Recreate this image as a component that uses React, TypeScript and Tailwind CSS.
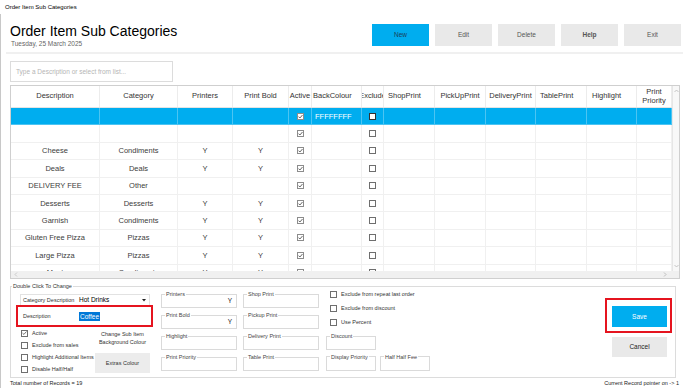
import React from 'react';

type Col = { label: string; w: string; align: string };

const cols: Col[] = [
  { label: 'Description', w: 'w-[89px]', align: 'justify-center' },
  { label: 'Category', w: 'w-[78px]', align: 'justify-center' },
  { label: 'Printers', w: 'w-[55px]', align: 'justify-center' },
  { label: 'Print Bold', w: 'w-[56px]', align: 'justify-center' },
  { label: 'Active', w: 'w-[23px]', align: 'justify-center' },
  { label: 'BackColour', w: 'w-[50px]', align: 'justify-start pl-[1px]' },
  { label: 'Exclude', w: 'w-[22px]', align: 'justify-center' },
  { label: 'ShopPrint', w: 'w-[51px]', align: 'justify-start pl-[4px]' },
  { label: 'PickUpPrint', w: 'w-[51px]', align: 'justify-center' },
  { label: 'DeliveryPrint', w: 'w-[50px]', align: 'justify-center' },
  { label: 'TablePrint', w: 'w-[51px]', align: 'justify-start pl-[4px]' },
  { label: 'Highlight', w: 'w-[50px]', align: 'justify-start pl-[5px]' },
  { label: 'Print\nPriority', w: 'w-[35px]', align: 'justify-center' },
];

type Row = { d: string; c: string; p: string; b: string; back: string };

const rows: Row[] = [
  { d: '', c: '', p: '', b: '', back: 'FFFFFFFF' },
  { d: '', c: '', p: '', b: '', back: '' },
  { d: 'Cheese', c: 'Condiments', p: 'Y', b: 'Y', back: '' },
  { d: 'Deals', c: 'Deals', p: 'Y', b: 'Y', back: '' },
  { d: 'DELIVERY FEE', c: 'Other', p: '', b: '', back: '' },
  { d: 'Desserts', c: 'Desserts', p: 'Y', b: 'Y', back: '' },
  { d: 'Garnish', c: 'Condiments', p: 'Y', b: 'Y', back: '' },
  { d: 'Gluten Free Pizza', c: 'Pizzas', p: 'Y', b: 'Y', back: '' },
  { d: 'Large Pizza', c: 'Pizzas', p: 'Y', b: 'Y', back: '' },
  { d: 'Meat', c: 'Condiments', p: 'Y', b: 'Y', back: '' },
];

// kleines Häkchen-Kästchen wie in der WinForms-Tabelle
const CheckMark = ({ on }: { on: boolean }) => (
  <span
    className={`flex items-center justify-center w-[7px] h-[7px] bg-white border ${
      on ? 'border-[#8c8c8c]' : 'border-[#6e6e6e]'
    }`}
  >
    {on && (
      <svg width="5" height="5" viewBox="0 0 5 5">
        <path d="M0.5 2.6 L1.9 4 L4.5 1" fill="none" stroke="#555" strokeWidth="0.9" />
      </svg>
    )}
  </span>
);

const FormCheck = ({ label, on = false }: { label: string; on?: boolean }) => (
  <div className="flex items-center gap-[4px] h-[12px]">
    <span className="flex items-center justify-center w-[7px] h-[7px] border border-[#6f6f6f] bg-white shrink-0">
      {on && (
        <svg width="6" height="6" viewBox="0 0 6 6">
          <path d="M0.6 3.1 L2.3 4.7 L5.4 1.2" fill="none" stroke="#444" strokeWidth="0.9" />
        </svg>
      )}
    </span>
    <span className="text-[5.5px] leading-[7px] text-[#333] whitespace-nowrap">{label}</span>
  </div>
);

const GroupBox = ({ label, value, w }: { label: string; value?: string; w: string }) => (
  <fieldset className={`border border-[#dadada] ${w} h-[16.5px] px-[3px] min-w-0`}>
    <legend className="px-[1px] text-[5.5px] leading-[6px] text-[#444]">{label}</legend>
    {value && <div className="text-right text-[6.5px] leading-[8px] text-[#222] pr-[1px]">{value}</div>}
  </fieldset>
);

const TopButton = ({ label, primary = false, bold = false }: { label: string; primary?: boolean; bold?: boolean }) => (
  <div
    className={`w-[57px] h-[22px] flex items-center justify-center text-[6.5px] ${
      primary ? 'bg-[#00adef] text-[#1b3d5c]' : 'bg-[#e9e9e9] text-[#555]'
    } ${bold ? 'font-bold text-[#333]' : ''}`}
  >
    {label}
  </div>
);

export default function App() {
  return (
    <div className="w-[688px] h-[388px] bg-white overflow-hidden flex flex-col font-['Liberation_Sans',Arial,sans-serif] text-[#222]">
      {/* Fenstertitel */}
      <div className="h-[14px] flex items-center pl-[5px] text-[6px] text-black shrink-0">Order Item Sub Categories</div>

      <div className="flex-1 border-l border-[#c8c8c8] flex flex-col">
        {/* Kopfbereich */}
        <div className="h-[38px] flex shrink-0">
          <div className="pl-[9px] pt-[9px]">
            <div className="text-[14px] leading-[16px] text-black">Order Item Sub Categories</div>
            <div className="text-[6.5px] leading-[8px] text-[#666] pl-[1px] mt-[1px]">Tuesday, 25 March 2025</div>
          </div>
          <div className="ml-auto flex gap-[6px] pr-[7px] pt-[10px]">
            <TopButton label="New" primary />
            <TopButton label="Edit" />
            <TopButton label="Delete" />
            <TopButton label="Help" bold />
            <TopButton label="Exit" />
          </div>
        </div>
        <div className="h-[2px] bg-[#f0f0f0] mx-[5px] shrink-0" />

        {/* Suchfeld */}
        <div className="mt-[7px] ml-[9px] w-[163px] h-[21px] border border-[#dcdcdc] flex items-center pl-[5px] text-[6.5px] text-[#b5b5b5] shrink-0">
          Type a Description or select from list...
        </div>

        {/* Tabelle */}
        <div className="mt-[3px] ml-[9px] w-[670px] h-[194px] border border-[#cfcfcf] flex flex-col shrink-0">
          <div className="flex h-[185px]">
            <div className="w-[661px] overflow-hidden">
              <div className="flex h-[22px] border-b border-[#e4e4e4]">
                {cols.map((c) => (
                  <div
                    key={c.label}
                    className={`${c.w} shrink-0 flex items-center ${c.align} border-r border-[#ececec] overflow-hidden text-center text-[7.5px] leading-[8.5px] text-[#333]`}
                  >
                    <span className="whitespace-pre">{c.label}</span>
                  </div>
                ))}
              </div>
              {rows.map((r, i) => {
                const sel = i === 0;
                const cell = `shrink-0 flex items-center border-r overflow-hidden whitespace-nowrap ${
                  sel ? 'border-[#4cc4f2]' : 'border-[#f0f0f0]'
                }`;
                return (
                  <div
                    key={i}
                    className={`flex h-[17.4px] border-b text-[7.5px] ${
                      sel ? 'bg-[#00adef] text-white border-[#4cc4f2]' : 'bg-white text-[#3c3c3c] border-[#f0f0f0]'
                    }`}
                  >
                    <div className={`${cell} w-[89px] justify-center`}>{r.d}</div>
                    <div className={`${cell} w-[78px] justify-center`}>{r.c}</div>
                    <div className={`${cell} w-[55px] justify-center`}>{r.p}</div>
                    <div className={`${cell} w-[56px] justify-center`}>{r.b}</div>
                    <div className={`${cell} w-[23px] justify-center`}>
                      <CheckMark on />
                    </div>
                    <div className={`${cell} w-[50px] justify-start pl-[3px]`}>{r.back}</div>
                    <div className={`${cell} w-[22px] justify-center`}>
                      {sel ? (
                        <span className="w-[7px] h-[7px] bg-white border-[1.5px] border-[#333]" />
                      ) : (
                        <CheckMark on={false} />
                      )}
                    </div>
                    <div className={`${cell} w-[51px]`} />
                    <div className={`${cell} w-[51px]`} />
                    <div className={`${cell} w-[50px]`} />
                    <div className={`${cell} w-[51px]`} />
                    <div className={`${cell} w-[50px]`} />
                    <div className={`${cell} w-[35px]`} />
                  </div>
                );
              })}
            </div>
            <div className="flex-1 bg-[#f8f8f8] border-l border-[#e6e6e6] flex flex-col items-center justify-between py-[3px]">
              <svg width="5" height="4" viewBox="0 0 5 4">
                <path d="M0.5 3 L2.5 1 L4.5 3" fill="none" stroke="#b8b8b8" strokeWidth="0.8" />
              </svg>
              <svg width="5" height="4" viewBox="0 0 5 4">
                <path d="M0.5 1 L2.5 3 L4.5 1" fill="none" stroke="#b8b8b8" strokeWidth="0.8" />
              </svg>
            </div>
          </div>
          <div className="flex-1 bg-[#f0f0f0] flex items-center justify-between px-[3px] pr-[12px]">
            <svg width="4" height="5" viewBox="0 0 4 5">
              <path d="M3 0.5 L1 2.5 L3 4.5" fill="none" stroke="#c0c0c0" strokeWidth="0.8" />
            </svg>
            <svg width="4" height="5" viewBox="0 0 4 5">
              <path d="M1 0.5 L3 2.5 L1 4.5" fill="none" stroke="#b0b0b0" strokeWidth="0.8" />
            </svg>
          </div>
        </div>

        {/* Bearbeitungsbereich */}
        <fieldset className="mt-[3px] ml-[9px] w-[666px] h-[96px] border border-[#dcdcdc] px-0 shrink-0 min-w-0">
          <legend className="ml-[1px] px-[1px] text-[5.5px] leading-[8px] text-[#333]">Double Click To Change</legend>
          <div className="flex items-start">
            {/* linke Spalte */}
            <div className="ml-[5px] w-[137px] flex flex-col">
              <div className="mt-[4px] ml-[4px] w-[130px] h-[12px] border border-[#e2e2e2] flex items-center pl-[2px]">
                <span className="text-[5.5px] w-[56px] text-[#333]">Category Description</span>
                <span className="text-[6.5px] text-black">Hot Drinks</span>
                <svg className="ml-auto mr-[3px]" width="4" height="3" viewBox="0 0 4 3">
                  <path d="M0 0 L4 0 L2 2.5 Z" fill="#222" />
                </svg>
              </div>
              <div className="-mt-[1px] h-[22px] border-2 border-[#e5141f] flex items-center pl-[5px]">
                <span className="text-[5.5px] w-[56px] text-[#333]">Description</span>
                <span className="bg-[#0078d7] text-white text-[6.5px] leading-[9px] px-[1px]">Coffee</span>
              </div>
              <div className="flex">
                <div className="pl-[5px] w-[79px]">
                  <FormCheck label="Active" on />
                  <FormCheck label="Exclude from sales" />
                  <FormCheck label="Highlight Additional Items" />
                  <FormCheck label="Disable Half/Half" />
                </div>
                <div className="w-[55px] flex flex-col items-center">
                  <div className="mt-[4px] text-[5.5px] leading-[7.5px] text-center text-[#333]">
                    Change Sub Item
                    <br />
                    Background Colour
                  </div>
                  <div className="mt-[7px] w-[55px] h-[20px] bg-[#ececec] flex items-center justify-center text-[5.5px] text-[#333]">
                    Extras Colour
                  </div>
                </div>
              </div>
            </div>

            {/* Gruppenfelder */}
            <div className="ml-[8px] mt-[1px] flex flex-col gap-[4.5px]">
              <GroupBox label="Printers" value="Y" w="w-[76px]" />
              <GroupBox label="Print Bold" value="Y" w="w-[76px]" />
              <GroupBox label="Highlight" w="w-[76px]" />
              <GroupBox label="Print Priority" w="w-[76px]" />
            </div>
            <div className="ml-[6px] mt-[1px] flex flex-col gap-[4.5px]">
              <GroupBox label="Shop Print" w="w-[76px]" />
              <GroupBox label="Pickup Print" w="w-[76px]" />
              <GroupBox label="Delivery Print" w="w-[76px]" />
              <GroupBox label="Table Print" w="w-[76px]" />
            </div>

            <div className="ml-[7px] -mt-[2px] flex flex-col">
              <div className="pl-[4px] flex flex-col">
                <div className="h-[14px] flex"><FormCheck label="Exclude from repeat last order" /></div>
                <div className="h-[14px] flex"><FormCheck label="Exclude from discount" /></div>
                <div className="h-[14px] flex"><FormCheck label="Use Percent" /></div>
              </div>
              <div className="mt-[3px]">
                <fieldset className="border border-[#dadada] w-[50px] h-[17px] px-[3px] min-w-0">
                  <legend className="px-[1px] text-[5.5px] leading-[6px] text-[#444]">Discount</legend>
                </fieldset>
              </div>
              <div className="mt-[3.5px] flex gap-[4px]">
                <fieldset className="border border-[#dadada] w-[50px] h-[17px] px-[3px] min-w-0">
                  <legend className="px-[1px] text-[5.5px] leading-[6px] text-[#444]">Display Priority</legend>
                </fieldset>
                <fieldset className="border border-[#dadada] w-[50px] h-[17px] px-[3px] min-w-0">
                  <legend className="px-[1px] text-[5.5px] leading-[6px] text-[#444]">Half Half Fee</legend>
                </fieldset>
              </div>
            </div>

            {/* Speichern / Abbrechen */}
            <div className="ml-auto mr-[3px] mt-[8px] flex flex-col">
              <div className="border-2 border-[#e5141f] pl-[5px] pr-[3px] pt-[6px] pb-[4px]">
                <div className="w-[55px] h-[21px] bg-[#00adef] text-white text-[6.5px] flex items-center justify-center">
                  Save
                </div>
              </div>
              <div className="ml-[7px] mt-[4px] w-[55px] h-[20px] bg-[#e9e9e9] text-[6.5px] text-[#222] flex items-center justify-center">
                Cancel
              </div>
            </div>
          </div>
        </fieldset>

        <div className="mt-[1px] flex justify-between pl-[9px] pr-[9px] text-[5.5px] leading-[8px] text-[#222]">
          <span>Total number of Records = 19</span>
          <span>Current Record pointer on -&gt; 1</span>
        </div>
      </div>
    </div>
  );
}
